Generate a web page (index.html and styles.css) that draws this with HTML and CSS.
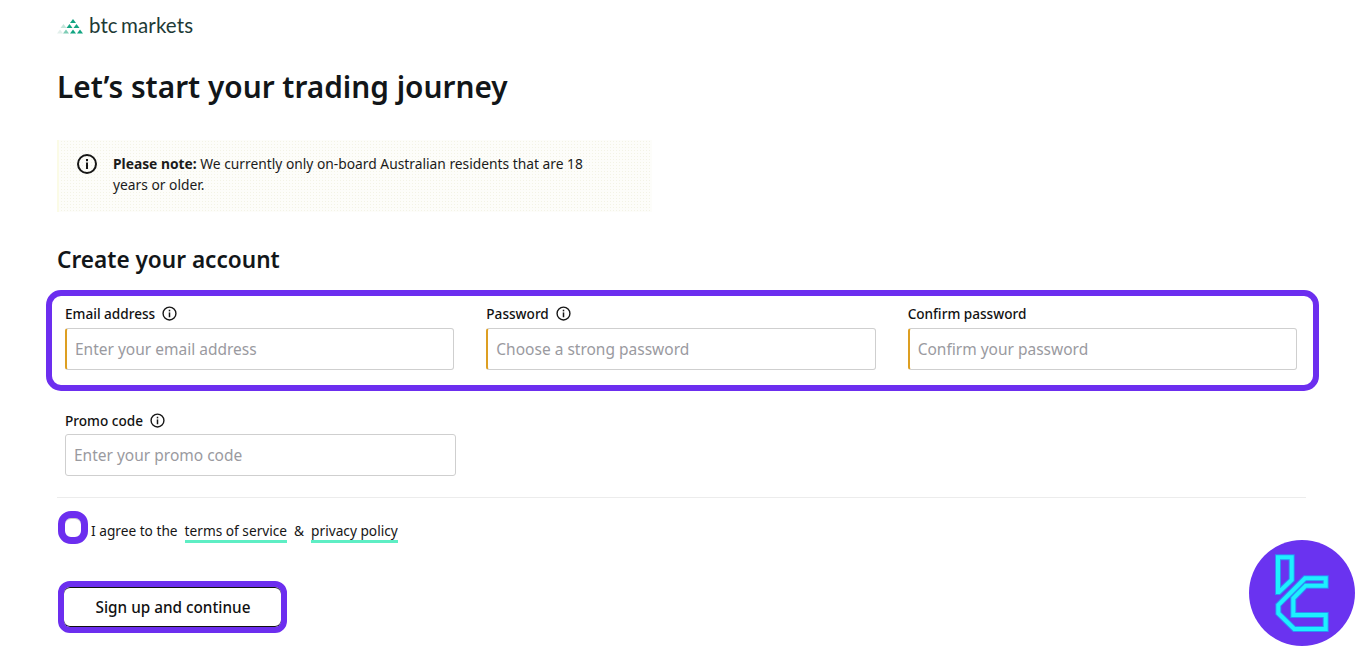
FILE: index.html
```html
<!DOCTYPE html>
<html lang="en">
<head>
<meta charset="utf-8">
<title>BTC Markets - Sign up</title>
<link rel="stylesheet" href="styles.css">
</head>
<body>
<main class="page">
  <header class="brand">
    <svg class="brand-mark" width="25" height="15" viewBox="0 0 25 15" aria-hidden="true">
      <g fill="#e2efeb"><path d="M-2 14.500 L1 10.500 L4 14.500Z"/></g>
      <g fill="#c3e5da"><path d="M1.500 9 L4.500 5 L7.500 9Z"/></g>
      <g fill="#7fcdb6"><path d="M4 14.500 L7 10.500 L10 14.500Z"/></g>
      <g fill="#12a582">
        <path d="M11 14.500 L14 10.500 L17 14.500Z"/><path d="M18 14.500 L21 10.500 L24 14.500Z"/>
        <path d="M7.500 9 L10.500 5 L13.500 9Z"/><path d="M14.500 9 L17.500 5 L20.500 9Z"/>
        <path d="M11 4 L14 0 L17 4Z"/>
      </g>
    </svg>
    <span class="brand-name">btc markets</span>
  </header>

  <h1 class="title">Let’s start your trading journey</h1>

  <aside class="note">
    <svg class="note-icon" width="22" height="22" viewBox="0 0 22 22" aria-hidden="true">
      <circle cx="11" cy="11" r="9" fill="none" stroke="#161616" stroke-width="2"/>
      <rect x="10" y="9.500" width="2" height="6.500" fill="#161616"/>
      <rect x="10" y="6" width="2" height="2.200" fill="#161616"/>
    </svg>
    <p class="note-text"><strong>Please note:</strong> We currently only on-board Australian residents that are 18 years or older.</p>
  </aside>

  <h2 class="subtitle">Create your account</h2>

  <section class="fields-highlight">
    <div class="field">
      <label class="field-label">Email address
        <svg class="info" width="15" height="15" viewBox="0 0 14 14" aria-hidden="true"><circle cx="7" cy="7" r="6" fill="none" stroke="#161616" stroke-width="1.300"/><rect x="6.300" y="6" width="1.400" height="4.500" fill="#161616"/><rect x="6.300" y="3.500" width="1.400" height="1.500" fill="#161616"/></svg>
      </label>
      <div class="input input-required">Enter your email address</div>
    </div>
    <div class="field">
      <label class="field-label">Password
        <svg class="info" width="15" height="15" viewBox="0 0 14 14" aria-hidden="true"><circle cx="7" cy="7" r="6" fill="none" stroke="#161616" stroke-width="1.300"/><rect x="6.300" y="6" width="1.400" height="4.500" fill="#161616"/><rect x="6.300" y="3.500" width="1.400" height="1.500" fill="#161616"/></svg>
      </label>
      <div class="input input-required">Choose a strong password</div>
    </div>
    <div class="field">
      <label class="field-label">Confirm password</label>
      <div class="input input-required">Confirm your password</div>
    </div>
  </section>

  <section class="field promo">
    <label class="field-label">Promo code
      <svg class="info" width="15" height="15" viewBox="0 0 14 14" aria-hidden="true"><circle cx="7" cy="7" r="6" fill="none" stroke="#161616" stroke-width="1.300"/><rect x="6.300" y="6" width="1.400" height="4.500" fill="#161616"/><rect x="6.300" y="3.500" width="1.400" height="1.500" fill="#161616"/></svg>
    </label>
    <div class="input">Enter your promo code</div>
  </section>

  <hr class="divider">

  <div class="agree">
    <span class="check"></span>
    <span class="agree-text">I agree to the</span>
    <a class="link" href="#">terms of service</a>
    <span class="agree-text">&amp;</span>
    <a class="link" href="#">privacy policy</a>
  </div>

  <button class="submit" type="button">Sign up and continue</button>
</main>

<svg class="badge" width="106" height="106" viewBox="0 0 106 106" aria-hidden="true">
  <circle cx="53" cy="53" r="53" fill="#6a33f0"/>
  <g fill="none" stroke="#2b90f6" stroke-width="6" stroke-linejoin="miter">
    <path d="M29 17.300 H42.700 V40 L30 52 H29 Z"/>
    <path d="M76.700 38.300 H56 L29.300 65 V73.300 L45.300 89 H76.700 V75 H44.300 V58.300 L56.700 45.700 H76.700 Z"/>
  </g>
  <g fill="none" stroke="#1df0ff" stroke-width="4" stroke-linejoin="miter">
    <path d="M29 17.300 H42.700 V40 L30 52 H29 Z"/>
    <path d="M76.700 38.300 H56 L29.300 65 V73.300 L45.300 89 H76.700 V75 H44.300 V58.300 L56.700 45.700 H76.700 Z"/>
  </g>
</svg>
</body>
</html>
```
FILE: styles.css
```css
* { box-sizing: border-box; }
html, body { margin: 0; height: 100%; background: #fff; }
body {
  font-family: "Noto Sans", "Open Sans", sans-serif;
  color: #161616;
  overflow: hidden;
  position: relative;
}
.page { padding: 14px 60px 0 57px; }
.brand { display: flex; align-items: center; gap: 5px; height: 24px; padding-left: 2px; }
.brand-mark { flex: none; margin-top: 1px; overflow: visible; }
.brand-name {
  font-family: Lato, sans-serif;
  font-size: 20.500px;
  line-height: 24px;
  margin-top: -2px;
  color: #1d3a36;
  word-spacing: -2px;
  letter-spacing: .1px;
}
.title { margin: 26px 0 0; font-size: 29.800px; line-height: 46px; font-weight: 600; color: #121619; }
.note {
  display: flex;
  gap: 15px;
  width: 595px;
  height: 72px;
  margin-top: 30px;
  padding: 13px 19px 0;
  background-color: #fdfdfa;
  background-image: radial-gradient(#f3f3e6 .6px, transparent .8px);
  background-size: 3px 3px;
  box-shadow: inset 2px 0 0 #fbfbe6;
}
.note-icon { flex: none; }
.note-text { margin: 0; font-size: 13.800px; line-height: 21px; width: 480px; color: #1b1b1b; }
.note-text strong { font-weight: 700; }
.subtitle { margin: 31px 0 0; font-size: 22.600px; line-height: 34px; font-weight: 600; color: #121619; }
.fields-highlight {
  display: grid;
  grid-template-columns: repeat(3, 1fr);
  gap: 32px;
  width: 1273px;
  height: 101px;
  margin: 13px 0 0 -11px;
  padding: 9px 16px 0 13px;
  border: 6px solid #6c2eef;
  border-radius: 15px;
}
.field-label {
  display: flex;
  align-items: center;
  gap: 7px;
  height: 16px;
  margin-bottom: 7px;
  font-size: 13.600px;
  font-weight: 500;
  color: #111;
}
.info { flex: none; margin-top: 1px; }
.input {
  height: 42px;
  padding-left: 8px;
  border: 1px solid #cfcfcf;
  border-radius: 3px;
  font-size: 15.500px;
  line-height: 40px;
  color: #9a9a9f;
  background: #fff;
}
.input-required { border-left: 2px solid #dd9f22; }
.promo { width: 391px; margin: 21px 0 0 8px; }
.promo .field-label { margin-bottom: 6px; }
.divider { margin: 21px 0 0; width: 1249px; border: 0; border-top: 1px solid #ececec; }
.agree { display: flex; align-items: center; gap: 7px; margin: 13px 0 0 1px; height: 33px; font-size: 13.700px; }
.check {
  width: 30px;
  height: 33px;
  margin-right: -4px;
  border: 7px solid #6c2eef;
  border-radius: 13px;
  background: #fff;
  box-shadow: inset 0 1px 0 #c9c9c9;
}
.agree-text { margin-top: 6px; }
.link {
  color: #161616;
  text-decoration: none;
  line-height: 18px;
  margin-top: 9px;
  border-bottom: 3px solid #5eeec4;
}
.submit {
  display: block;
  width: 229px;
  height: 52px;
  margin: 37px 0 0 1px;
  padding: 0 0 0 1px;
  background: #fff;
  border: 6px solid #6c2eef;
  border-radius: 12px;
  box-shadow: inset 0 1px 0 #111, inset 0 -1px 0 #111;
  font: 500 15.300px "Noto Sans", sans-serif;
  color: #111;
}
.badge { position: absolute; left: 1249px; top: 540px; }
```
